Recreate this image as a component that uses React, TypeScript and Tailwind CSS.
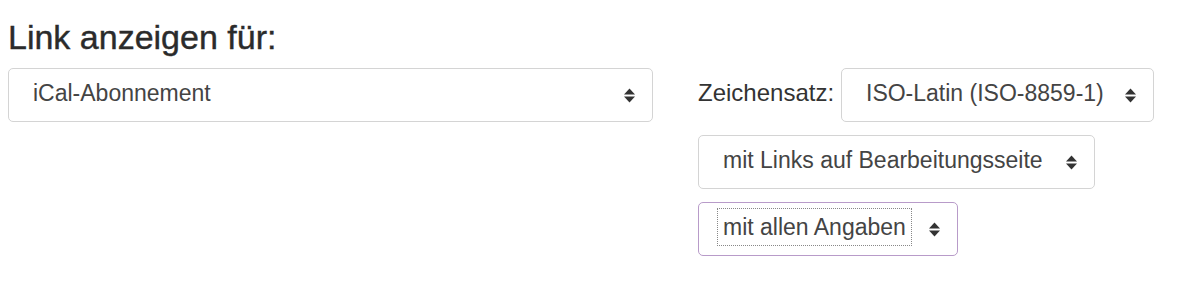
import React from "react";

function Arrows() {
  return (
    <svg width="11" height="15" viewBox="0 0 11 15" className="shrink-0">
      <polygon points="0,6.5 5.5,0.5 11,6.5" fill="#333" />
      <polygon points="0,8.5 11,8.5 5.5,14.5" fill="#333" />
    </svg>
  );
}

function Select({
  label,
  width,
  focused = false,
}: {
  label: string;
  width: string;
  focused?: boolean;
}) {
  return (
    <div
      className={`${width} h-[54px] shrink-0 flex items-center justify-between rounded-[5px] border bg-white pl-[24px] pr-[17px] pb-[4px] ${
        focused ? "border-[#b89bc9]" : "border-[#d4d4d4]"
      }`}
    >
      {focused ? (
        <span className="text-[23px] leading-[26px] text-[#444] whitespace-nowrap outline-dotted outline-1 outline-[#888] outline-offset-[5px] mr-[20px]">
          {label}
        </span>
      ) : (
        <span className="text-[23px] leading-[26px] text-[#444] whitespace-nowrap mr-[20px]">
          {label}
        </span>
      )}
      <span className="pt-[4px] flex">
        <Arrows />
      </span>
    </div>
  );
}

export default function App() {
  return (
    <div
      className="w-[1200px] h-[287px] bg-white pl-[8px] overflow-hidden"
      style={{ fontFamily: '"Liberation Sans", Arial, sans-serif' }}
    >
      <h3 className="mt-[19px] text-[34px] leading-[37px] font-medium text-[#2b2b2b] [-webkit-text-stroke:0.4px_#2b2b2b]">
        Link anzeigen für:
      </h3>
      <div className="mt-[12px] flex gap-[45px]">
        <Select label="iCal-Abonnement" width="w-[645px]" />
        <div className="flex flex-col gap-[13px]">
          <div className="flex items-center">
            <span className="w-[143px] shrink-0 text-[24px] leading-[26px] text-[#333] pb-[4px]">
              Zeichensatz:
            </span>
            <Select label="ISO-Latin (ISO-8859-1)" width="w-[313px]" />
          </div>
          <Select label="mit Links auf Bearbeitungsseite" width="w-[397px]" />
          <Select label="mit allen Angaben" width="w-[260px]" focused />
        </div>
      </div>
    </div>
  );
}
